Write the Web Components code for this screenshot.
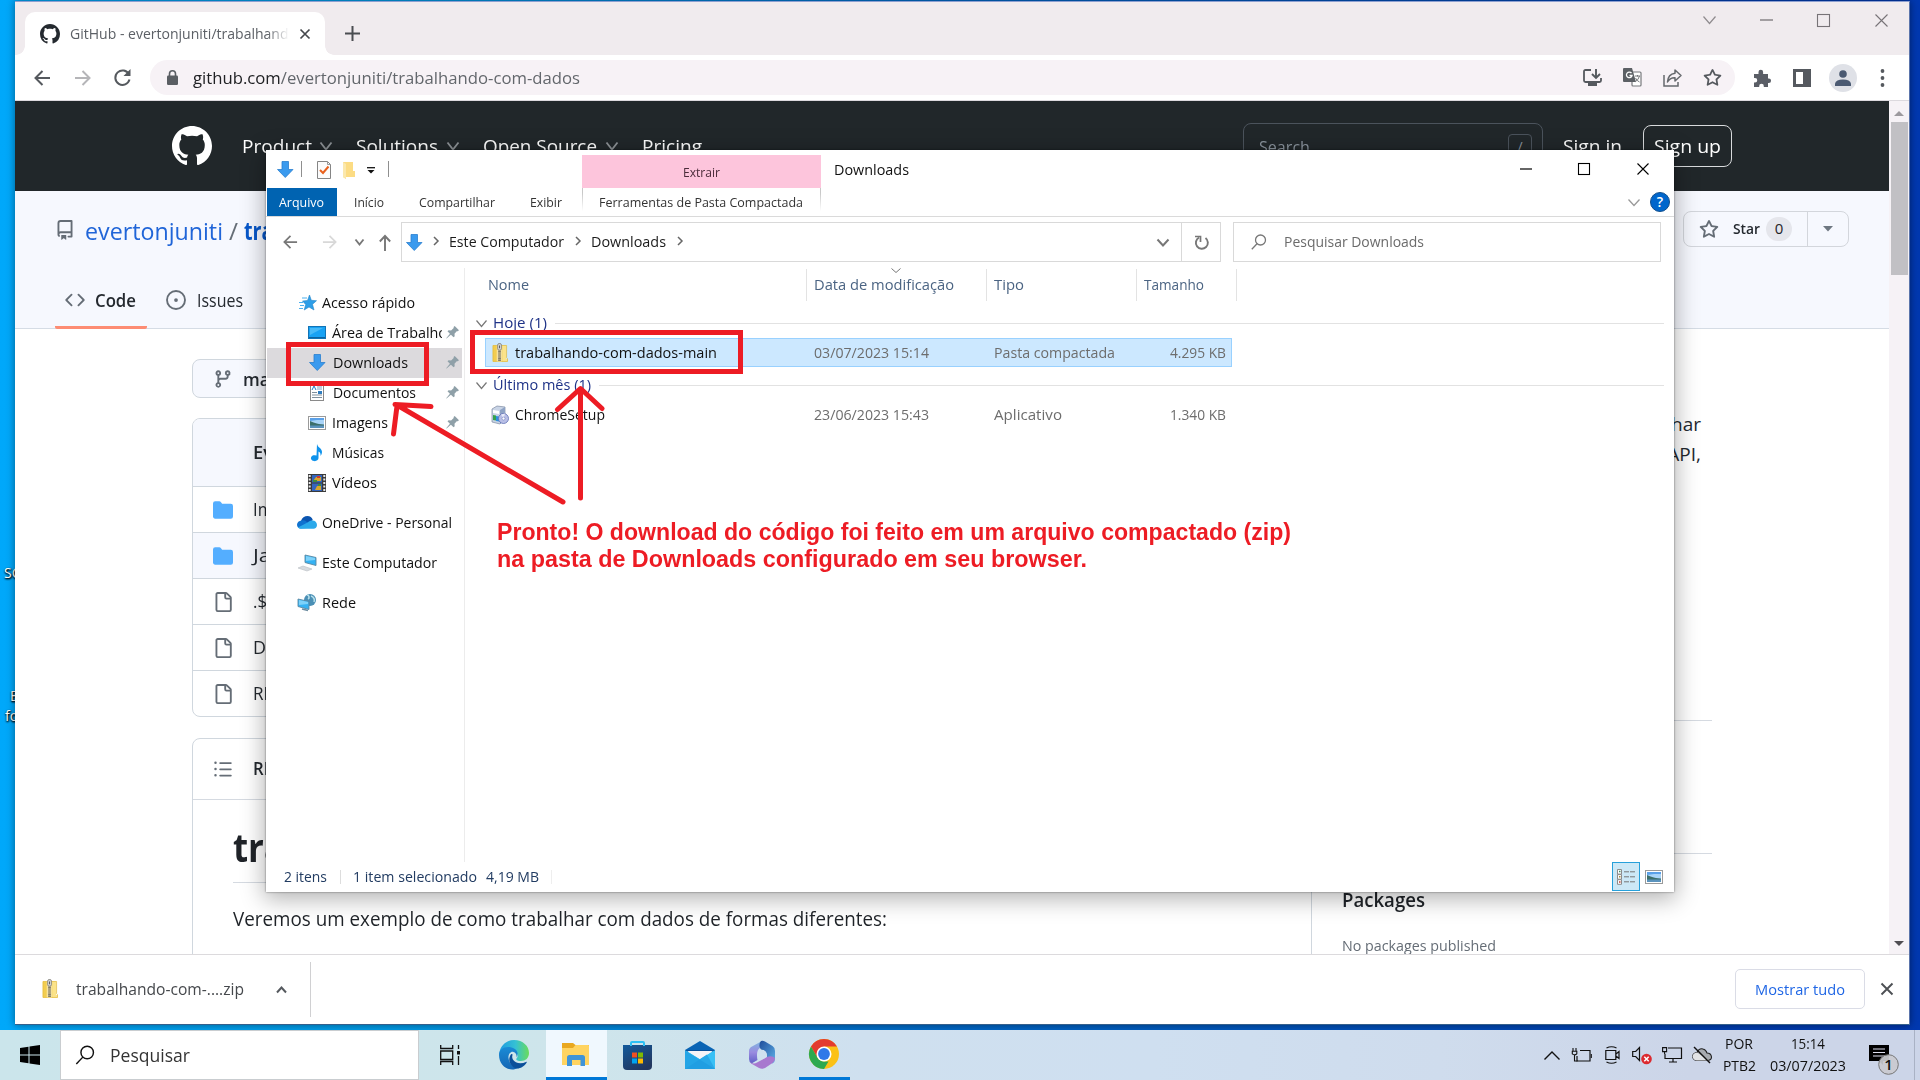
<!DOCTYPE html>
<html lang="pt-BR"><head><meta charset="utf-8"><title>Downloads</title>
<style>html,body{margin:0;width:1920px;height:1080px;overflow:hidden;font-family:"Open Sans","Noto Sans",sans-serif}</style></head>
<body><desk-top></desk-top>
<script>
/* ---------- helpers ---------- */
const BASE='*{box-sizing:border-box}.row{display:flex;align-items:center;flex:none}.row>*{flex:none}svg{display:block;overflow:visible}';
const T=(x,w,t,fs,c,extra='')=>({x,w,h:`<fit-text w="${w}" style="font-size:${fs}px;color:${c};${extra}">${t}</fit-text>`});
const S=(x,w,h,inner,vb,extra='')=>({x,w,h:`<svg width="${w}" height="${h}" viewBox="${vb||`0 0 ${w} ${h}`}" style="${extra}">${inner}</svg>`});
const B=(x,w,h)=>({x,w,h});
/* lays items out one after another, spacing each from the end of the one before */
const row=(x0,h,items,style='')=>{let c=x0;return `<div class="row" style="height:${h}px;${style}">`+items.map(i=>{const m=i.x-c;c=i.x+i.w;return `<div style="margin-left:${m}px;width:${i.w}px">${i.h}</div>`}).join('')+'</div>'};
const chev=(w,h,c,s=1.3)=>`<path d="M.5 .5L${w/2} ${h-.5}L${w-.5} .5" fill="none" stroke="${c}" stroke-width="${s}"/>`;
const right=(c,s=1.5)=>`<path d="M1 1l4 4-4 4" fill="none" stroke="${c}" stroke-width="${s}"/>`;
const make=(n,css,html)=>customElements.define(n,class extends HTMLElement{constructor(){super();this.attachShadow({mode:'open'}).innerHTML=`<style>${BASE}${css}</style>${html}`}});
customElements.define('fit-text',class extends HTMLElement{
 constructor(){super();this.attachShadow({mode:'open'}).innerHTML='<style>:host{display:block;white-space:nowrap;line-height:1.36}span{display:inline-block;transform-origin:0 50%;vertical-align:top}</style><span><slot></slot></span>'}
 connectedCallback(){const s=this.shadowRoot.querySelector('span'),w=+this.getAttribute('w');this.style.width=w+'px';const n=s.getBoundingClientRect().width;if(n)s.style.transform=`scaleX(${w/n})`}});

/* ---------- icons ---------- */
const OCT='M8 0c4.42 0 8 3.58 8 8a8.013 8.013 0 0 1-5.45 7.59c-.4.08-.55-.17-.55-.38 0-.27.01-1.13.01-2.2 0-.75-.25-1.23-.54-1.48 1.78-.2 3.65-.88 3.65-3.95 0-.88-.31-1.59-.82-2.15.08-.2.36-1.02-.08-2.12 0 0-.67-.22-2.2.82-.64-.18-1.32-.27-2-.27-.68 0-1.36.09-2 .27-1.53-1.03-2.2-.82-2.2-.82-.44 1.1-.16 1.92-.08 2.12-.51.56-.82 1.28-.82 2.15 0 3.06 1.86 3.75 3.64 3.95-.23.2-.44.55-.51 1.07-.46.21-1.61.55-2.33-.66-.15-.24-.6-.83-1.23-.82-.67.01-.27.38.01.53.34.19.73.9.82 1.13.16.45.68 1.31 2.69.94 0 .67.01 1.3.01 1.49 0 .21-.15.45-.55.38A7.995 7.995 0 0 1 0 8c0-4.42 3.58-8 8-8Z';
const oct=c=>`<path fill="${c}" d="${OCT}"/>`;
const G='#656d76';
const REPO=`<path fill="${G}" d="M2 2.5A2.5 2.5 0 0 1 4.5 0h8.75a.75.75 0 0 1 .75.75v12.5a.75.75 0 0 1-.75.75h-2.5a.75.75 0 0 1 0-1.5h1.75v-2h-8a1 1 0 0 0-.714 1.7.75.75 0 1 1-1.072 1.05A2.495 2.495 0 0 1 2 11.5Zm10.5-1h-8a1 1 0 0 0-1 1v6.708A2.486 2.486 0 0 1 4.5 9h8ZM5 12.25a.25.25 0 0 1 .25-.25h3.5a.25.25 0 0 1 .25.25v3.25a.25.25 0 0 1-.4.2l-1.45-1.087a.249.249 0 0 0-.3 0L5.4 15.7a.25.25 0 0 1-.4-.2Z"/>`;
const CODE=`<path fill="${G}" d="m11.28 3.22 4.25 4.25a.75.75 0 0 1 0 1.06l-4.25 4.25a.75.75 0 0 1-1.06-1.06L13.94 8l-3.72-3.72a.75.75 0 0 1 1.06-1.06Zm-6.56 0a.75.75 0 0 1 1.06 1.06L2.06 8l3.72 3.72a.75.75 0 0 1-1.06 1.06L.47 8.53a.75.75 0 0 1 0-1.06Z"/>`;
const ISSUE=`<circle cx="8" cy="8" r="7.2" fill="none" stroke="${G}" stroke-width="1.5"/><circle cx="8" cy="8" r="1.5" fill="${G}"/>`;
const BRANCH=`<path fill="${G}" d="M9.5 3.25a2.25 2.25 0 1 1 3 2.122V6A2.5 2.5 0 0 1 10 8.5H6a1 1 0 0 0-1 1v1.128a2.251 2.251 0 1 1-1.5 0V5.372a2.25 2.25 0 1 1 1.5 0v1.836A2.493 2.493 0 0 1 6 7h4a1 1 0 0 0 1-1v-.628A2.25 2.25 0 0 1 9.5 3.25Zm-6 0a.75.75 0 1 0 1.5 0 .75.75 0 0 0-1.5 0Zm8.25-.75a.75.75 0 1 0 0 1.5.75.75 0 0 0 0-1.5ZM4.25 12a.75.75 0 1 0 0 1.5.75.75 0 0 0 0-1.5Z"/>`;
const STAR=c=>`<path fill="${c}" d="M8 .25a.75.75 0 0 1 .673.418l1.882 3.815 4.21.612a.75.75 0 0 1 .416 1.279l-3.046 2.97.719 4.192a.751.751 0 0 1-1.088.791L8 12.347l-3.766 1.98a.75.75 0 0 1-1.088-.79l.72-4.194L.818 6.374a.75.75 0 0 1 .416-1.28l4.21-.611L7.327.668A.75.75 0 0 1 8 .25Zm0 2.445L6.615 5.5a.75.75 0 0 1-.564.41l-3.097.45 2.24 2.184a.75.75 0 0 1 .216.664l-.528 3.084 2.769-1.456a.75.75 0 0 1 .698 0l2.77 1.456-.53-3.084a.75.75 0 0 1 .216-.664l2.24-2.183-3.096-.45a.75.75 0 0 1-.564-.41L8 2.694Z"/>`;
const FILE=`<path fill="${G}" d="M2 1.75C2 .784 2.784 0 3.75 0h6.586c.464 0 .909.184 1.237.513l2.914 2.914c.329.328.513.773.513 1.237v9.586A1.75 1.75 0 0 1 13.25 16h-9.5A1.75 1.75 0 0 1 2 14.25Zm1.75-.25a.25.25 0 0 0-.25.25v12.5c0 .138.112.25.25.25h9.5a.25.25 0 0 0 .25-.25V6h-2.75A1.75 1.75 0 0 1 9 4.25V1.5Zm6.75.062V4.25c0 .138.112.25.25.25h2.688l-.011-.013-2.914-2.914-.013-.011Z"/>`;
const FOLD=`<path fill="#54aeff" d="M1.75 1A1.75 1.75 0 0 0 0 2.75v10.5C0 14.216.784 15 1.75 15h12.5A1.75 1.75 0 0 0 16 13.250v-8.5A1.75 1.750 0 0 0 14.25 3H7.5a.25.25 0 0 1-.2-.1l-.9-1.200C6.070 1.260 5.550 1 5 1H1.750Z"/>`;
const LIST=`<path fill="${G}" d="M5.75 2.5h8.5a.75.75 0 0 1 0 1.5h-8.5a.75.75 0 0 1 0-1.500Zm0 5h8.500a.75.75 0 0 1 0 1.500h-8.500a.75.75 0 0 1 0-1.500Zm0 5h8.500a.75.75 0 0 1 0 1.500h-8.500a.75.75 0 0 1 0-1.500ZM2 14a1 1 0 1 1 0-2 1 1 0 0 1 0 2Zm1-6a1 1 0 1 1-2 0 1 1 0 0 1 2 0ZM2 4a1 1 0 1 1 0-2 1 1 0 0 1 0 2Z"/>`;
const ZIP=`<path d="M1 2h10.500v17H1z" fill="#f2cd50"/><path d="M11 2h4v14l1.500 1v2H11z" fill="#fbe38a"/><path d="M1 2h14.500v13l1 1v3H1z" fill="none" stroke="#e3b93a" stroke-width=".8"/><path d="M5 2h5.500v17H5z" fill="#f6e3a0"/><path d="M8 6v13" stroke="#5d5c58" stroke-width="3" stroke-dasharray="1.200 1"/><rect x="6" y="0" width="4" height="7" rx="1.500" fill="#d8d8d8" stroke="#77766f" stroke-width=".8"/><path d="M8 2v3" stroke="#555"/>`;
const DOWN=`<path d="M5 .5h6.500v8h4.500L8.250 16.500.5 8.500H5z" fill="#3a9aee" stroke="#2a7fcf" stroke-width=".8"/>`;
const PIC=`<rect x=".5" y=".5" width="17" height="13" fill="#fff" stroke="#9a9a9a"/><path d="M2 2h14v10H2z" fill="#a9d4f8"/><path d="M2 2h14v2L9 4 2 5z" fill="#5aa0e8"/><path d="M2 5c3 1 6 3 14 3.500V10H2z" fill="#3d6f6b"/><path d="M2 9.500h14V12H2z" fill="#5b93bd"/>`;
const PIN=`<path d="M8.700 0L13 4.300l-1.300 1-1-.1-2.200 2.500.2 2.500-1.100 1.100-2.700-2.600L.6 12.600l-.4-.4 3.700-4.400L1.500 5.300l1.100-1.100 2.500.2 2.600-2.300-.1-1z" fill="#8fa0a8"/>`;
const MONITOR=(x,y)=>`<path d="M${x} ${y}l11 2.500v8l-11-3z" fill="#35b2f3" stroke="#5b88a2" stroke-width=".9"/><path d="M${x+1} ${y+1}l9 2v2l-9 1z" fill="#7dd2fa"/>`;
const SEARCH=(c,s=1.3)=>`<circle cx="9.500" cy="6" r="5" fill="none" stroke="${c}" stroke-width="${s}"/><path d="M6 9.700L.8 15.200" stroke="${c}" stroke-width="${s}"/>`;
const ARR=(c,s=2)=>`<path d="M16 8H2M8.500 1L1.500 8l7 7" fill="none" stroke="${c}" stroke-width="${s}"/>`;
const FARR=(c,s=2)=>`<path d="M1 8h14M8.500 1l7 7-7 7" fill="none" stroke="${c}" stroke-width="${s}"/>`;
const CROSS=(n,c,s)=>`<path d="M.5 .5L${n-.5} ${n-.5}M${n-.5} .5L.5 ${n-.5}" stroke="${c}" stroke-width="${s}" fill="none"/>`;
const UP='margin-bottom:27px',D1='padding-top:2px';

/* ---------- browser window ---------- */
make('chrome-tabs',`:host{display:flex;height:53px;background:#f0ebee;align-items:flex-end}.tab{position:relative;margin-left:10px;width:300px;height:43px;background:#fff;border-radius:10px 10px 0 0}.tab:before,.tab:after{content:"";position:absolute;bottom:0;width:9px;height:9px}.tab:before{left:-9px;background:radial-gradient(circle at 0 0,#f0ebee 8.500px,#fff 9px)}.tab:after{right:-9px;background:radial-gradient(circle at 100% 0,#f0ebee 8.500px,#fff 9px)}.clip{overflow:hidden;-webkit-mask:linear-gradient(90deg,#000 90%,transparent)}`,
 `<div class="tab">${row(25,43,[S(40,20,20,oct('#24292f'),'0 0 16 16'),B(70,219,`<div class="clip"><fit-text w="227" style="font-size:14px;color:#5c6066">GitHub - evertonjuniti/trabalhando</fit-text></div>`),S(300,10,10,CROSS(10,'#45484c',1.700))])}</div>`+
 row(325,43,[S(345,15,15,'<path d="M7.500 0v15M0 7.500h15" stroke="#4a4d51" stroke-width="2"/>'),S(1703,13,8,chev(13,8,'#8f8b8e',1.200),0,UP),S(1760,13,2,'<path d="M0 1h13" stroke="#6f6c6f" stroke-width="1.200"/>',0,UP),S(1817,13,13,'<rect x=".5" y=".5" width="12" height="12" fill="none" stroke="#777377" stroke-width="1.100"/>',0,UP),S(1875,13,13,CROSS(13,'#777377',1.100),0,UP)]));
make('chrome-bar',`:host{display:block;height:46px;background:#fff;border-bottom:1px solid #dcd9de}.omni{background:#f7f2f6;border-radius:18px;height:35px;width:1585px}.pf{width:28px;height:28px;border-radius:50%;background:#dfe1e7;display:grid;place-items:center}`,
 row(15,45,[S(34,17,16,ARR('#55595e'),'0 0 17 16'),S(74,17,16,FARR('#b5b5b8'),'0 0 17 16'),S(114,17,17,'<path d="M15 5.500A7.200 7.200 0 1 0 15.500 10.500" fill="none" stroke="#55595e" stroke-width="2"/><path d="M16.500 0v7h-7z" fill="#55595e"/>'),
 B(150,1585,`<div class="omni">${row(150,35,[S(167,11,15,'<rect y="5.500" width="11" height="9.500" rx="1.200" fill="#5a5e63"/><path d="M2.500 6V3.800a3 3 0 0 1 6 0V6" fill="none" stroke="#5a5e63" stroke-width="1.600"/>'),
 T(193,387,'<span style="color:#202124">github.com</span>/evertonjuniti/trabalhando-com-dados',17,'#63676c'),
 S(1583,19,18,'<path d="M8 1H2.500Q1 1 1 2.500v9Q1 13 2.500 13h14q1.500 0 1.500-1.500V9" fill="none" stroke="#55595e" stroke-width="1.800"/><path d="M5 13h9v4H5z" fill="#55595e"/><path d="M13 0v8M9 5l4 4 4-4" fill="none" stroke="#55595e" stroke-width="1.900"/>'),
 S(1623,19,19,'<rect x="9" y="4" width="9" height="14" rx="1" fill="#fff" stroke="#77797c" stroke-width="1.200"/><path d="M1 0h8l4 14H1Q0 14 0 13V1Q0 0 1 0z" fill="#5c6065"/><path d="M8.500 5.200A2.800 2.800 0 1 0 9 7.500H6.500" fill="none" stroke="#fff" stroke-width="1.300"/><path d="M12 8h5M14.500 7v1.500M16.500 8q-1 4-4.500 6M12.500 10q1.500 3 4 4" stroke="#77797c" fill="none"/>'),
 S(1663,19,18,'<path d="M1 6v11h14v-4" fill="none" stroke="#66696d" stroke-width="1.500"/><path d="M12 1l6 5.500-6 5.500V8.800Q7 8.500 4.500 13 5 5 12 4.200z" fill="none" stroke="#66696d" stroke-width="1.500" stroke-linejoin="round"/>'),
 S(1703,19,19,STAR('#55595e'),'0 0 16 15')])}</div>`),
 S(1753,18,18,'<path d="M1 5h4.500V3a2.300 2.300 0 0 1 4.600 0v2H15v4.500h.8a2.200 2.200 0 0 1 0 4.500H15v4h-4.200v-1a2.300 2.300 0 0 0-4.600 0v1H1v-4.500h1a2.200 2.200 0 0 0 0-4.500H1z" fill="#5a5e66"/>'),
 S(1793,18,18,'<path d="M0 0h18v18H0zM3 3v12h7V3z" fill-rule="evenodd" fill="#55595f"/>'),
 B(1829,28,'<div class="pf"><svg width="16" height="16"><circle cx="8" cy="4" r="3.800" fill="#4b5a72"/><path d="M0 16v-2.500Q1 9.500 8 9.500t8 4V16z" fill="#4b5a72"/></svg></div>'),
 S(1880,5,18,'<circle cx="2.500" cy="2" r="1.900" fill="#55595e"/><circle cx="2.500" cy="9" r="1.900" fill="#55595e"/><circle cx="2.500" cy="16" r="1.900" fill="#55595e"/>')]));
const hc=x=>S(x,12,8,chev(12,8,'#8d9296',1.800));
make('gh-header',`:host{display:block;height:90px;background:#21272a}.s{width:300px;height:47px;border:1px solid #4b535c;border-radius:8px}.k{width:24px;height:25px;border:1px solid #4b535c;border-radius:4px;display:grid;place-items:center;color:#8b949e;font-size:14px}.u{width:89px;height:42px;border:1px solid #d8dadc;border-radius:8px}`,
 row(15,90,[S(172,40,40,oct('#fff'),'0 0 16 16'),T(242,70,'Product',19,'#fff',D1),hc(320),T(356,82,'Solutions',19,'#fff',D1),hc(447),T(483,114,'Open Source',19,'#fff',D1),hc(606),T(642,60,'Pricing',19,'#fff',D1),
 B(1243,300,`<div class="s">${row(1244,45,[T(1259,51,'Search',17,'#8b949e',D1),B(1508,24,'<div class="k">/</div>')])}</div>`),T(1563,59,'Sign in',19,'#fff',D1),B(1643,89,`<div class="u">${row(1644,40,[T(1654,67,'Sign up',19,'#fff',D1)])}</div>`)]));
make('gh-repo-head',`:host{display:block;height:138px;background:#f6f8fe;border-bottom:1px solid #d5dce5}.star{display:flex;width:166px;height:36px;margin-top:-5px;border:1px solid #d3d6dc;border-radius:8px}.n{width:26px;height:24px;border-radius:12px;background:#e5e6ec;text-align:center;font-size:15px;line-height:23px;color:#1f2328}.code{width:92px;height:58px;border-bottom:3px solid #fd8c73;border-radius:0 0 2px 2px}.dd{border-left:1px solid #d3d6dc}`,
 row(15,80,[S(55,20,20,REPO,'0 0 16 16','margin-top:-2px'),T(85,138,'evertonjuniti',24.500,'#2065d8'),T(229,9,'/',24.500,'#656d76'),T(244,42,'trab',24.500,'#0757c9','font-weight:700'),
 B(1683,166,`<div class="star">${row(1684,34,[S(1699,20,20,STAR('#656d76'),'0 0 16 15'),T(1733,27,'Star',15,'#24292f','font-weight:600'),B(1766,26,'<div class="n">0</div>')],'width:123px')}<div class="dd">${row(1808,34,[S(1823,10,6,'<path d="M0 0h10L5 5.500z" fill="#6e7781"/>')])}</div></div>`)])+
 row(15,58,[B(55,92,`<div class="code">${row(55,58,[S(65,20,20,CODE,'0 0 16 16'),T(95,41,'Code',17.500,'#24292f','font-weight:600;'+D1)])}</div>`),S(166,20,20,ISSUE,'0 0 16 16'),T(197,46,'Issues',17.500,'#24292f',D1)]));
const frow=(ic,t,w,bg)=>row(193,46,[S(213,20,20,ic,'0 0 16 16'),T(253,w,t,17.500,'#24292f')],`border-top:1px solid #d0d7de;${bg?'background:#f6f8fe':''}`);
make('gh-body',`:host{display:flex}.main{width:1120px;margin:30px 0 0 177px}.br{width:140px;border:1px solid #d0d7de;border-radius:8px;background:#f6f8fe}.card{border:1px solid #d0d7de;border-radius:8px;margin-top:20px;overflow:hidden}.side{width:370px;margin-left:30px}.ab{text-align:right;padding-right:11px;font-size:19px;color:#24292f;line-height:30px;margin-top:80.500px}hr{border:0;margin:0;height:1px;background:#d5dae1}`,
 `<div class="main"><div class="br">${row(193,37,[S(213,20,20,BRANCH,'0 0 16 16'),T(243,43,'main',17.500,'#24292f','font-weight:600;'+D1)])}</div>
 <div class="card">${row(193,67,[T(253,20,'Ev',17.500,'#24292f','font-weight:600')],'background:#f6f8fe')}${frow(FOLD,'Im',20)}${frow(FOLD,'Ja',18,1)}${frow(FILE,'.$',14)}${frow(FILE,'D',13)}${frow(FILE,'RE',20)}</div>
 <div class="card" style="height:300px;margin-top:21px">${row(193,60,[S(213,20,20,LIST,'0 0 16 16'),T(253,20,'RE',17.500,'#24292f','font-weight:600')])}<hr>
 <div style="padding:20px 40px 0">${row(233,56,[T(233,52,'tra',39,'#1f2328','font-weight:700;margin-top:-3px')])}<hr style="margin-top:6px">${row(233,34,[T(233,654,'Veremos um exemplo de como trabalhar com dados de formas diferentes:',19.300,'#1f2328')],'margin-top:19px')}</div></div></div>
 <div class="side"><div style="height:30px"></div><div class="ab" style="margin-top:50px">har<br>API,</div><hr style="margin-top:251px"><hr style="margin-top:132px">${row(1342,30,[T(1342,83,'Packages',19,'#1f2328','font-weight:600')],'margin-top:32px')}${row(1342,24,[T(1342,154,'No packages published',14.800,'#656d76')],'margin-top:17px')}</div>`);
make('scroll-bar',`:host{display:flex;flex-direction:column;align-items:center;justify-content:space-between;width:20px;background:#f6f2f6;padding:10px 0 8px}.t{width:17px;height:153px;background:#c1c0c4;margin-bottom:auto;margin-top:6px}`,
 `<svg width="10" height="5"><path d="M0 5h10L5 0z" fill="#9c999e"/></svg><div class="t"></div><svg width="10" height="5"><path d="M0 0h10L5 5z" fill="#4f4d52"/></svg>`);
make('download-bar',`:host{display:block;height:70px;background:#fff;border-top:1px solid #dcdadd}.b{width:130px;height:40px;border:1px solid #dadce6;border-radius:5px}.v{width:1px;height:55px;background:#d0d0d2}`,
 row(15,68,[S(42,16,20,ZIP,'0 0 17 20'),T(76,168,'trabalhando-com-....zip',15.500,'#45484c','padding-top:1.500px'),S(276,11,7,'<path d="M1 6.500L5.500 1.500 10 6.500" fill="none" stroke="#55595e" stroke-width="2"/>'),B(310,1,'<div class="v"></div>'),B(1735,130,`<div class="b">${row(1736,38,[T(1755,90,'Mostrar tudo',15,'#1f66e5','font-weight:500')])}</div>`),S(1881,12,12,CROSS(12,'#4d5054',1.900))]));
make('chrome-window',`:host{position:absolute;left:15px;top:1px;width:1895px;height:1024px;background:#fff;display:flex;flex-direction:column;border-top:1px solid #8d9fd0;border-bottom:1px solid #35608c;border-right:1px solid #5b75ac;box-shadow:0 0 8px rgba(0,0,0,.45)}.v{display:flex;height:853px}.p{width:1874px;height:853px;overflow:hidden}`,
 `<chrome-tabs></chrome-tabs><chrome-bar></chrome-bar><div class="v"><div class="p"><gh-header></gh-header><gh-repo-head></gh-repo-head><gh-body></gh-body></div><scroll-bar></scroll-bar></div><download-bar></download-bar>`);

/* ---------- file explorer ---------- */
const K='#1b1b1b',sep=`<div style="width:1px;height:16px;background:#8f8f8f"></div>`;
make('ex-title',`:host{display:flex;height:38px}.pink{margin-top:5px;width:239px;height:33px;background:#fdc5dc}`,
 row(266,38,[S(277,16,17,DOWN,0,'margin-top:1px'),B(301,1,sep),S(317,14,18,'<path d="M.5 .5h10l3 3v14H.5z" fill="#fbfbfb" stroke="#858585"/><path d="M10.500 .5v3h3" fill="none" stroke="#999"/><path d="M3 9l3 3 5.500-6.500" fill="none" stroke="#e8601c" stroke-width="2"/>',0,'margin-top:2px'),S(343,12,18,'<path d="M0 1h10v9h2v6H3v2L0 16z" fill="#fcdc84"/><path d="M0 1l3 2v15l-3-2z" fill="#fbe8ad"/>',0,'margin-top:1px'),S(367,8,7,'<path d="M0 .7h8" stroke="#111" stroke-width="1.300"/><path d="M.5 3h7L4 6.500z" fill="#111"/>',0,'margin-top:3px'),B(388,1,sep)],'width:316px')+
 `<div class="pink">${row(582,33,[T(683,37,'Extrair',12.600,'#4b2c3a',D1)])}</div>`+
 row(821,38,[T(834,75,'Downloads',14.500,'#111','padding-top:1px'),S(1520,12,2,'<path d="M0 1h12" stroke="#000" stroke-width="1.200"/>'),S(1578,12,12,'<rect x=".5" y=".5" width="11" height="11" fill="none" stroke="#000" stroke-width="1.100"/>'),S(1637,12,12,CROSS(12,'#000',1.100))]));
make('ex-ribbon',`:host{display:block;height:29px;border-bottom:1px solid #dadada}.a{width:70px;height:28px;background:#0063b1}.f{width:239px;height:28px;border:solid;border-width:0 1px;border-image:linear-gradient(#c8c8c8 20%,#fff 80%) 1}.q{width:20px;height:20px;border-radius:50%;background:#0066cc;border:1px solid #124f8c;color:#fff;font:600 14px/18px "Open Sans";text-align:center}`,
 row(266,28,[B(267,70,`<div class="a">${row(267,28,[T(279,45,'Arquivo',12.800,'#fff',D1)])}</div>`),T(354,30,'Início',12.800,'#333',D1),T(419,76,'Compartilhar',12.800,'#333',D1),T(530,32,'Exibir',12.800,'#333',D1),B(582,239,`<div class="f">${row(583,28,[T(599,204,'Ferramentas de Pasta Compactada',12.800,'#333',D1)])}</div>`),S(1628,12,7,chev(12,7,'#999',1.300)),B(1650,20,'<div class="q">?</div>')]));
make('ex-address',`:host{display:block;height:51px}.b{height:40px;border:1px solid #d9d9d9;margin-top:-1px}`,
 row(266,51,[S(282,17,14,ARR('#777',2),'0 0 17 16','margin-top:-1px'),S(321,17,14,FARR('#d8d8d8',2),'0 0 17 16','margin-top:-1px'),S(355,9,6,chev(9,6,'#777',1.900),0,'margin-top:-2px'),S(379,12,16,'<path d="M6 16V1M.8 6.500L6 1l5.200 5.500" fill="none" stroke="#777" stroke-width="1.900"/>'),
 B(401,820,`<div class="b" style="display:flex">${row(402,38,[S(406,16,17,DOWN),S(433,6,10,right('#666'),0,'margin-top:-2px'),T(449,115,'Este Computador',14.500,K),S(575,6,10,right('#666'),0,'margin-top:-2px'),T(591,75,'Downloads',14.500,K),S(677,6,10,right('#666'),0,'margin-top:-2px'),S(1157,12,7,chev(12,7,'#777',2))],'width:780px;border-right:1px solid #d9d9d9')}${row(1182,38,[S(1195,14,15,'<path d="M4 2.500a6 6 0 1 0 6.500 .5" fill="none" stroke="#777" stroke-width="1.900"/><path d="M0 1.500h5.500V7" fill="none" stroke="#777" stroke-width="1.700"/>')])}</div>`),
 B(1233,428,`<div class="b">${row(1234,38,[S(1251,16,16,SEARCH('#777')),T(1284,140,'Pesquisar Downloads',14.500,'#6b6b6b')])}</div>`)]));
const nav=(x,tx,w,t,svg,iw,ih,pin,o={})=>row(267,30,[S(x,iw,ih,svg,0,'margin-top:-1px'),o.clip?B(tx,110,`<div style="overflow:hidden"><fit-text w="${w}" style="font-size:14.500px;color:#111">${t}</fit-text></div>`):T(tx,w,t,14.500,'#111'),...(pin?[S(446,13,13,PIN,0,'margin-top:-1px')]:[])],`width:195px;margin-left:1px;${o.s||''}`);
make('ex-nav',`:host{display:block;width:199px;height:594px;border-right:1px solid #ececec;padding-top:20px}`,
 nav(299,322,93,'Acesso rápido','<path d="M10.500 0l1.800 5.300 5.200.4-4 3.600 1.500 5.700-5-3-4.800 3 1.500-5.500L3.500 6 8.500 5.500z" fill="#2d9ee8" stroke="#2484c8" stroke-width=".6"/><path d="M3 3h5M0 7.500h4M1 10.500h4M0 13.500h4" stroke="#4ab0ee" stroke-width="1.200"/>',17,16)+
 nav(308,332,115,'Área de Trabalho','<rect x=".5" y=".5" width="17" height="12" fill="#18a2f4" stroke="#1273b5"/><path d="M1 11.500h16" stroke="#0c629f"/><path d="M2 2h13L2 9z" fill="#48baf8"/>',18,13,1,{clip:1})+
 nav(309,333,75,'Downloads',DOWN,17,17,1,{s:'background:#dcdadd'})+
 nav(310,333,83,'Documentos','<rect x=".5" y=".5" width="13" height="16" fill="#fff" stroke="#8a8a8a"/><path d="M2 8.500h5M2 11h10M2 13.500h10" stroke="#7f8f9c"/><path d="M7 3h5M7 5h5" stroke="#7ba2c4"/><rect x="8" y="7" width="4" height="3" fill="#2f7dbf"/><path d="M2 6l2-4 2 4" fill="none" stroke="#1c7bc8"/>',14,17,1)+
 nav(308,332,56,'Imagens',PIC,18,14,1)+
 nav(311,332,52,'Músicas','<path d="M6 0c1 4 5 4 5 8 0 2-1 3-1.500 4 .5-3-1-4-2-4.500V14a3.800 3 0 1 1-2-2.500z" fill="#0f93ec"/>',11,17,0)+
 nav(308,332,45,'Vídeos','<path d="M0 0h18v18H0z" fill="#3a3a3a"/><path d="M1.700 1v17M16.300 1v17" stroke="#e6e6e6" stroke-width="2" stroke-dasharray="2 1.500"/><path d="M4 1h10v7.500H4zM4 9.500h10V17H4z" fill="#3465bd"/><path d="M8 3h5v4H5z" fill="#d9a52b"/><path d="M9 12h4v4H7z" fill="#d9a52b"/><path d="M5 6h4v2H5zM10 10h3v2h-3z" fill="#3f8e3b"/><path d="M9 2h3v2H9z" fill="#cf3832"/>',18,18)+
 nav(297,322,130,'OneDrive - Personal','<path d="M4 5C5 1.500 7.500 0 10.500 0c2.500 0 4.500 1.500 5.300 4L10 9z" fill="#0b55b0"/><path d="M4.500 4.500C6 4 8 4.500 9 5.200l8 6.300L4 12.500C1.500 12.500 0 11 0 8.800 0 6.500 2 4.700 4.500 4.500z" fill="#1072cf"/><path d="M15.500 4.500c2.500 0 4.500 2 4.500 4.500 0 2.200-1.600 3.800-3.500 3.800H4C2.800 12.800 1.800 12.300 1 11.500l10-5.200c1-1.200 2.700-1.800 4.500-1.800z" fill="#2ba9ea"/>',20,13,0,{s:'margin-top:10px'})+
 nav(298,322,115,'Este Computador',MONITOR(7,0)+'<path d="M0 13l5-2 9 3-5 2z" fill="#d7dbdf" stroke="#b8bdc3" stroke-width=".6"/>',18,16,0,{s:'margin-top:10px'})+
 nav(298,322,34,'Rede','<circle cx="12" cy="6" r="6" fill="#4a8fb5"/><path d="M9 1c2 0 3 3 1 4M13 2c3 1 4 4 3 6" stroke="#b6dfea" stroke-width="1.600" fill="none"/>'+MONITOR(0,5)+'<path d="M4 15l6 1.500" stroke="#6c8ca0" stroke-width="1.500"/>',18,17,0,{s:'margin-top:10px'}));
const HC='#4b6483',line=x=>B(x,1,'<div style="width:1px;height:32px;background:#e3e3e3"></div>');
const grp=(w,t)=>row(465,22,[S(476,11,7,chev(11,7,'#777',1.200)),T(493,w,t,14.500,'#1e3287'),B(493+w+8,1664-501-w,'<div style="height:1px;background:#e2e2e2"></div>')]);
const SETUP='<path d="M2 3l5-3 8 1v12l-5 5-8-2z" fill="#c9d4e6" stroke="#7d8aa0" stroke-width=".7"/><path d="M10 4l5-3v12l-5 5z" fill="#8ea3c5"/><path d="M3 4l6 1v3L3 7z" fill="#fff"/><path d="M3 9l3 .5v5L3 14z" fill="#36a14c"/><path d="M6 10l3 .5v5L6 15z" fill="#2d8fdf"/><circle cx="13.500" cy="12.500" r="5" fill="#b9bfe6" stroke="#5d6fb4" stroke-width=".8"/><path d="M13.500 12.500L11 8.500l4-1z" fill="#e9ecfa"/><circle cx="13.500" cy="12.500" r="1.500" fill="#fff" stroke="#5d6fb4" stroke-width=".5"/>';
make('ex-list',`:host{display:block;flex:1}`,
 `<div style="height:8px">${row(465,5,[S(891,10,5,chev(10,5,'#777',1))])}</div>`+
 row(465,32,[T(488,41,'Nome',14.500,HC),line(806),T(814,140,'Data de modificação',14.500,HC),line(986),T(994,30,'Tipo',14.500,HC),line(1136),T(1144,60,'Tamanho',14.500,HC),line(1236)],'margin-top:-7px')+
 `<div style="height:11px"></div>`+grp(54,'Hoje (1)')+
 row(486,28,[S(492,16,20,ZIP,'0 0 17 20'),T(515,202,'trabalhando-com-dados-main',14.500,'#111'),T(814,115,'03/07/2023 15:14',14.500,'#6d6d6d'),T(994,121,'Pasta compactada',14.500,'#6d6d6d'),T(1170,56,'4.295 KB',14.500,'#6d6d6d')],'width:747px;margin:4px 0 0 20px;background:#cce8ff;border:1px solid #99d1ff;height:29px')+
 `<div style="height:7px"></div>`+grp(98,'Último mês (1)')+
 row(486,28,[S(490,19,19,SETUP),T(515,90,'ChromeSetup',14.500,'#111'),T(814,115,'23/06/2023 15:43',14.500,'#6d6d6d'),T(994,68,'Aplicativo',14.500,'#6d6d6d'),T(1170,56,'1.340 KB',14.500,'#6d6d6d')],'margin:5px 0 0 21px'));
make('ex-status',`:host{display:block;height:31px}.v{width:28px;height:29px;background:#cce8f6;border:1px solid #26a0da;display:grid;place-items:center}`,
 row(266,29,[T(284,43,'2 itens',14.500,'#223c62'),B(340,1,'<div style="width:1px;height:14px;background:#ddd"></div>'),T(353,124,'1 item selecionado',14.500,'#223c62'),T(486,53,'4,19 MB',14.500,'#223c62'),B(551,1,'<div style="width:1px;height:14px;background:#eee"></div>'),
 B(1612,28,'<div class="v"><svg width="18" height="16"><path d="M.5 .5h4v4.600h-4zM.5 5.600h4v4.600h-4zM.5 10.700h4v4.600h-4z" fill="#fff" stroke="#8b8b8b"/><path d="M2 2.500h1.500" stroke="#3c8b62" stroke-width="1.500"/><path d="M2 7.800h1.500" stroke="#a8893a" stroke-width="1.500"/><path d="M2 13h1.500" stroke="#c03a2a" stroke-width="1.500"/><path d="M7 2.800h5M13 2.800h5M7 7.800h5M13 7.800h5M7 12.800h5M13 12.800h5" stroke="#777"/></svg></div>'),S(1645,18,14,PIC)]));
make('explorer-window',`:host{position:absolute;left:266px;top:150px;width:1408px;height:742px;background:#fff;box-shadow:0 5px 22px 2px rgba(0,0,0,.3),0 0 2px rgba(0,0,0,.5)}.c{display:flex;height:594px}`,
 `<ex-title></ex-title><ex-ribbon></ex-ribbon><ex-address></ex-address><div class="c"><ex-nav></ex-nav><ex-list></ex-list></div><ex-status></ex-status>`);

/* ---------- annotations ---------- */
make('red-notes',`:host{position:absolute;inset:0}svg{position:absolute;inset:0}.t{position:absolute;left:497px;top:519px;font-family:"Liberation Sans",Arial,sans-serif;font-weight:700}`,
 `<svg width="1920" height="1080" fill="none" stroke="#ed1c24" stroke-width="5"><rect x="288.500" y="344.500" width="138" height="39"/><rect x="472.500" y="332.500" width="268" height="39"/><path d="M563 502L397 405M395 404.500L431 406.500M397 406L393.500 434M580.500 498V390M557.500 409.500L580.500 388.500 602 408.500" stroke-linecap="round" stroke-linejoin="round"/></svg>
 <div class="t"><fit-text w="794" style="font-size:23px;line-height:27px;color:#ed1c24">Pronto! O download do código foi feito em um arquivo compactado (zip)</fit-text><fit-text w="590" style="font-size:23px;line-height:27px;color:#ed1c24">na pasta de Downloads configurado em seu browser.</fit-text></div>`);

/* ---------- taskbar ---------- */
const K0='#111';
make('task-bar',`:host{position:absolute;left:0;top:1030px;width:1920px;height:50px;background:linear-gradient(90deg,#cbe5eb 0,#cee5eb 30%,#cfe0ef 45%,#cfdff0 60%,#cfdced 75%,#ccd5e8 88%,#ccd5e8)}.s{width:359px;height:50px;background:#fff;border:1px solid #c9cdd0}.f{width:61px;height:50px;background:#f0f8fe;border-bottom:3px solid #0078d7}.c{width:51px;height:50px;border-bottom:3px solid #0078d7}`,
 row(0,50,[S(20,20,20,'<path d="M0 3l8.500-1.300V9.500H0zM9.500 1.500L20 0v9.500H9.500zM0 10.500h8.500v7.800L0 17zM9.500 10.500H20V20L9.500 18.500z" fill="#000"/>'),
 B(60,360,`<div class="s">${row(61,48,[S(75,20,20,SEARCH('#111',1.150),'0 0 15.500 16'),T(110,80,'Pesquisar',18,'#333')])}</div>`),
 S(440,21,20,'<path d="M.7 0v3.500h12V0M.7 20v-3.500h12V20M.7 6h12v8.500h-12z" fill="none" stroke="#111" stroke-width="1.300"/><path d="M18.500 0v4M18.500 11v9" stroke="#111" stroke-width="1.300"/><path d="M17 6h3v3.500h-3z" fill="#111"/>'),
 S(499,30,30,'<defs><linearGradient id="ea"><stop stop-color="#1f9be0"/><stop offset=".55" stop-color="#35c1d4"/><stop offset="1" stop-color="#6bdc5a"/></linearGradient><linearGradient id="eb" x2="0" y2="1"><stop stop-color="#1a8bd6"/><stop offset="1" stop-color="#1566b4"/></linearGradient></defs><path d="M.5 12C2 5 8 0 15 0c9 0 15 6 15 13 0 5-3.500 8-8 8-3.500 0-5.500-1-4.500-2.500 2-2 1.500-5.500-2-7C10 9 3 11 .5 15z" fill="url(#ea)"/><path d="M0 15C0 10 4 7 9 7c5 0 9 2.500 9.500 6 .2 1.300 0 3-1 4.500 .5-3-1-5-3-5.500C12 11 9 14 9.500 18c.5 5 4 9.500 10 9.500C12 33 0 27 0 15z" fill="url(#eb)"/><path d="M12.200 14c-3 4-2.500 9 1.500 12.500 3 2.600 6 2.500 9.500.5 2-1 3.500-2.800 4.500-4.500.3-.6-.2-1-.8-.6-4.500 2.300-11 1.500-13-2.400-.8-1.500-1-3.500-.2-5z" fill="#0b4f9a"/>'),
 B(546,61,`<div class="f">${row(546,48,[S(562,27,23,'<path d="M0 0h11l2.500 2H27v20H0z" fill="#e9a820"/><path d="M0 5h11l2.500-3H26q1 0 1 1v19H0z" fill="#ffd461"/><path d="M5 23v-8.500q0-2.500 2.500-2.500h13q2.500 0 2.500 2.500V23h-4.500v-6H10v6z" fill="#3f94d8"/>')])}</div>`),
 S(623,29,29,'<defs><linearGradient id="sa" x2=".6" y2="1"><stop stop-color="#135a9c"/><stop offset="1" stop-color="#22375f"/></linearGradient></defs><path d="M0 4h29v21q0 4-4 4H4q-4 0-4-4z" fill="url(#sa)"/><path d="M8 5V2Q8 1 9 1h11q1 0 1 1v3" fill="none" stroke="#2cc0f5" stroke-width="2"/><path d="M9 11.500h5v5H9z" fill="#f25022"/><path d="M15 11.500h5v5h-5z" fill="#7fba00"/><path d="M9 17.500h5v5H9z" fill="#00a4ef"/><path d="M15 17.500h5v5h-5z" fill="#ffb900"/>'),
 S(685,30,28,'<path d="M0 9L15 0l15 9v2H0z" fill="#0a64b4"/><path d="M2 9.500h26L15 20z" fill="#f4f4f8"/><path d="M0 9l15 9L30 9v19H0z" fill="#38c0f5"/><path d="M1 9h28L15 18z" fill="#f6f3f7"/><path d="M0 9h30l-1.500 1h-27z" fill="#0a4f98"/><path d="M0 28L22 13.500 30 28z" fill="#28a8e8"/><path d="M0 9.500L30 28H0z" fill="#1c9ae0" opacity=".7"/>'),
 S(749,26,28,'<defs><linearGradient id="ma" x2="0" y2="1"><stop stop-color="#7fb8e0"/><stop offset=".5" stop-color="#9a8ce0"/><stop offset="1" stop-color="#5f5fc6"/></linearGradient><linearGradient id="mb" x2="1" y2="1"><stop stop-color="#1f4d9a"/><stop offset="1" stop-color="#5fb2ea"/></linearGradient></defs><path d="M13 0L3 5.500Q0 7 0 10v8q0 3 2.500 4.500l6-3.500Q8 17 8 14t1-5q1-2 4-3 2-2 0-6z" fill="url(#ma)"/><path d="M12 0q2-.5 4 .5L23.500 5Q26 6.500 26 10v8q0 3-2.500 4.500L18 19v-4q0-4-3-5-4-1.500-4.500-4.500Q10 2 12 0z" fill="url(#mb)"/><path d="M1 20.500Q4 24 8 21.500L18 16q5-2 8 1 0 3.500-2.500 5L16 27q-3 1.500-6 0L3 23q-1.500-1-2-2.500z" fill="#a878cf"/><circle cx="13" cy="13.500" r="4.700" fill="#cfe1ef"/>'),
 B(799,51,`<div class="c">${row(799,48,[S(809,30,30,'<circle cx="15" cy="15" r="15" fill="#fbc116"/><path d="M15 0A15 15 0 0 1 28 7.500H15L8.500 18.700 2 7.500A15 15 0 0 1 15 0z" fill="#e33b2e"/><path d="M2 7.500L8.500 18.750Q11 22.500 15 22.500h4.500L15 30A15 15 0 0 1 2 7.500z" fill="#2da94f"/><circle cx="15" cy="15" r="7.500" fill="#fff"/><circle cx="15" cy="15" r="5.900" fill="#2f78e8"/>')])}</div>`),
 S(1544,16,9,'<path d="M.5 8.500L8 1l7.500 7.500" fill="none" stroke="#111" stroke-width="1.400"/>'),
 S(1572,20,13,'<path d="M8 1.500h10V12H5V7" fill="none" stroke="#111" stroke-width="1.200"/><path d="M19.300 5v4M1 2V-1M4 2V-1M.3 2.300h4.500v2.500q-2.200 2-4.500 0zM2.500 6v6h3" stroke="#111" stroke-width="1.100" fill="none"/>'),
 S(1605,16,18,'<path d="M.8 4.500h10v9H.8zM11 8l3-2.500v7L11 10" fill="none" stroke="#111" stroke-width="1.200"/><path d="M1.500 2q5-2.500 10 0M1.500 16q5 2.500 10 0" fill="none" stroke="#111" stroke-width="1.200"/>'),
 S(1632,20,18,'<path d="M.7 5.500h3L7.500 1.500v13l-3.800-4h-3z" fill="none" stroke="#111" stroke-width="1.200"/><circle cx="14.500" cy="13" r="5.300" fill="#dc2a30"/><path d="M12.300 10.800l4.400 4.400M16.700 10.800l-4.400 4.400" stroke="#fff" stroke-width="1.500"/>'),
 S(1662,20,16,'<path d="M6 1h13.500v10.500H3V7M11 11.500V15M7 15h8" fill="none" stroke="#111" stroke-width="1.200"/><path d="M.6 .6h4v4h-4zM2.600 4.500V7" fill="none" stroke="#111" stroke-width="1.100"/>'),
 S(1692,20,16,'<path d="M5 5.500Q7 1 11 2q3 .5 4 4 4 0 4.500 4 0 3-3.500 3.500H4.500Q1 13 .6 9.500 .8 6 5 5.500z" fill="#a8abb0" stroke="#222" stroke-width="1.100"/><path d="M5 5.500l12 8H4.500Q1 13 .6 9.500 .8 6 5 5.500z" fill="#e2e3e6"/><path d="M2 0l16 16" stroke="#111" stroke-width="1.400"/>'),
 B(1723,33,`<div style="padding-left:2px"><fit-text w="28" style="font-size:14.500px;line-height:22.500px;color:${K0}">POR</fit-text></div><fit-text w="33" style="font-size:14.500px;line-height:22.500px;color:${K0}">PTB2</fit-text>`),
 B(1770,76,`<div style="padding-left:21px"><fit-text w="34" style="font-size:14.500px;line-height:22.500px;color:${K0}">15:14</fit-text></div><fit-text w="76" style="font-size:14.500px;line-height:22.500px;color:${K0}">03/07/2023</fit-text>`),
 S(1869,30,29,'<path d="M0 0h20v16h-6v4l-4-4H0z" fill="#000"/><path d="M4 4h12M4 7.500h12M4 11h12" stroke="#dde" stroke-width="1.200"/><circle cx="19.500" cy="19.500" r="9.800" fill="#c9cad0" stroke="#777" fill-opacity=".93"/><text x="19.500" y="25" text-anchor="middle" font-size="15" font-weight="600" fill="#111">1</text>',0,'margin-top:9px'),
 B(1914,1,'<div style="width:1px;height:50px;background:#a9b2c4"></div>')]));
make('desk-icons',`:host{display:block;width:15px;height:1030px;overflow:hidden;color:#fff;font-size:14px;line-height:20px;text-shadow:0 1px 2px #000,1px 1px 2px #000;white-space:nowrap}`,
 `<div style="padding:563px 0 0 4px">SC</div><div style="padding:103px 0 0 10px">E</div><div style="padding-left:5px">fo</div>`);
make('desk-top',`:host{display:block;position:relative;width:1920px;height:1080px;background:linear-gradient(90deg,#00a8fa 0,#009ce8 20%,#0068c8 50%,#0046b4 80%,#0038b0 100%);overflow:hidden}`,
 `<desk-icons></desk-icons><chrome-window></chrome-window><explorer-window></explorer-window><red-notes></red-notes><task-bar></task-bar>`);
</script></body></html>
